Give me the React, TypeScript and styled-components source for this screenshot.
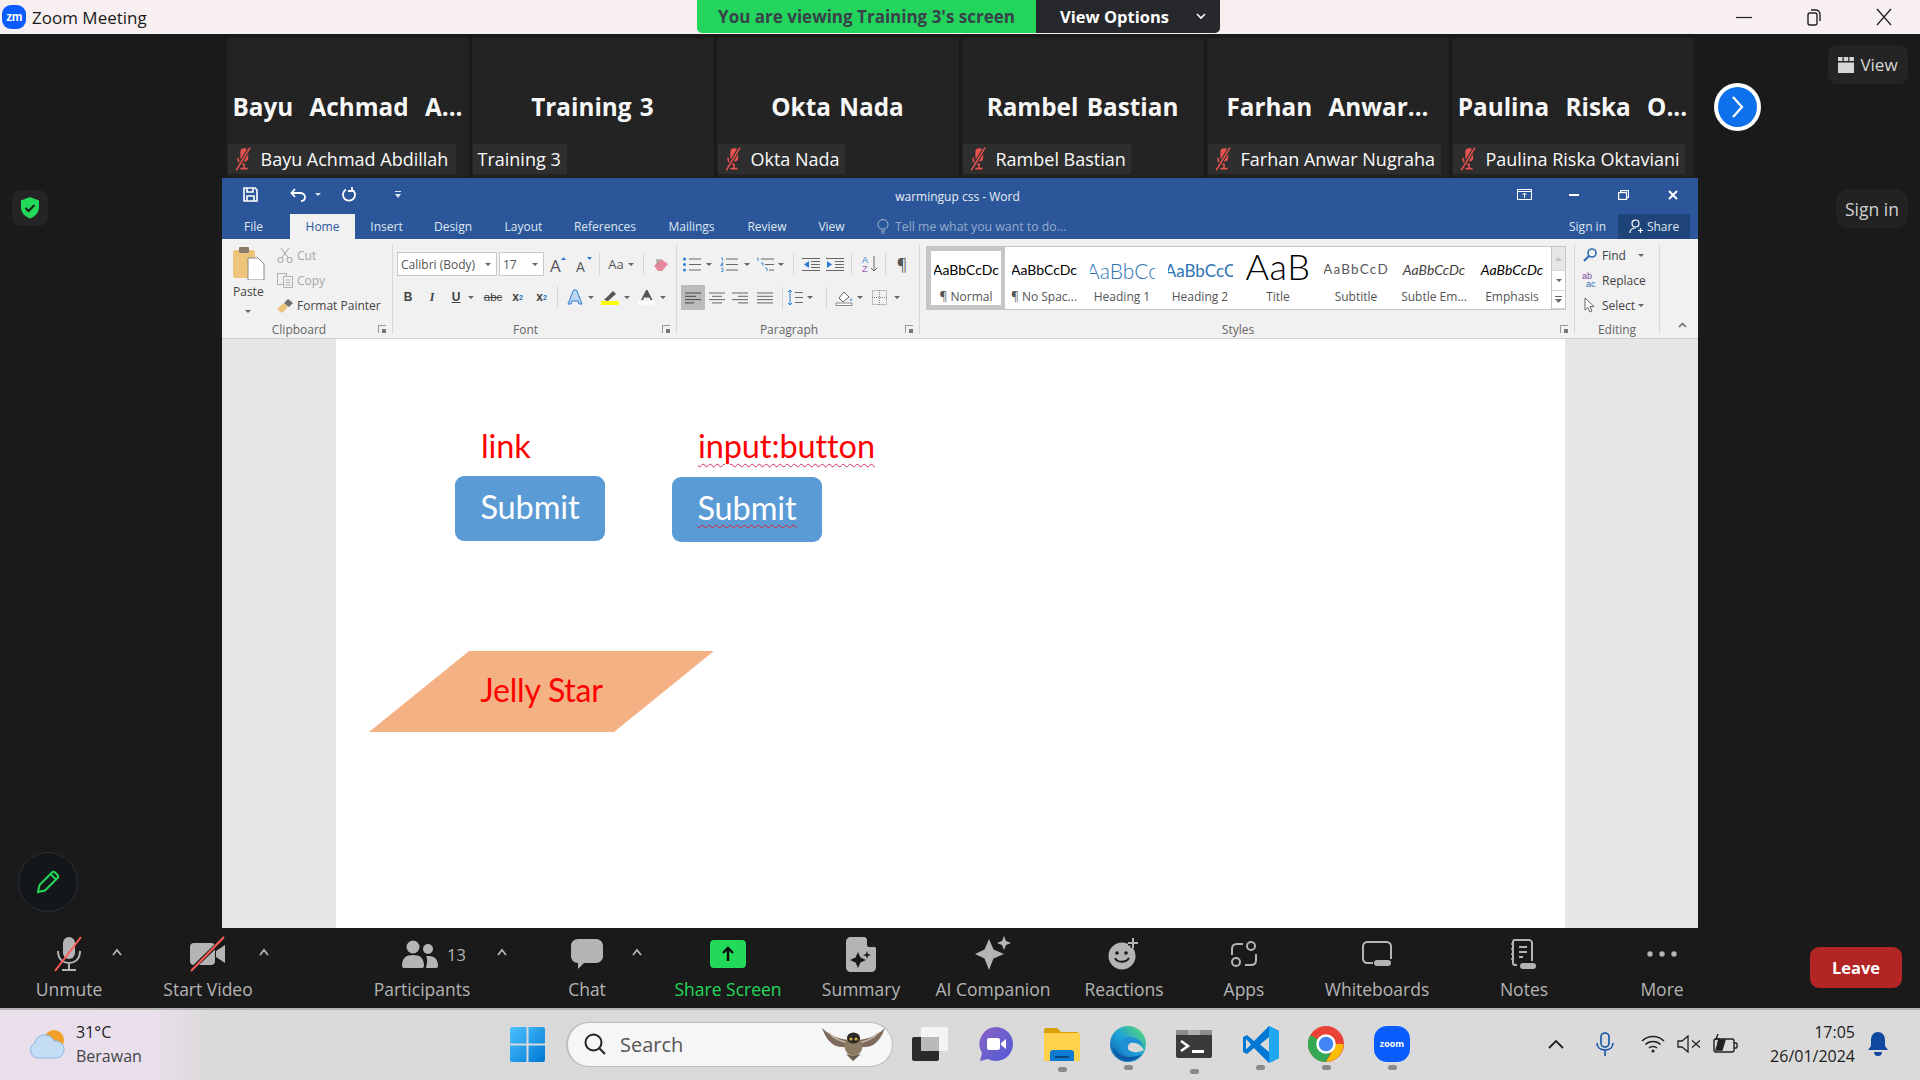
import React from "react";
import styled, { createGlobalStyle } from "styled-components";

const Global = createGlobalStyle`
  html, body { margin: 0; padding: 0; background: #1a1a1a; }
  #root { width: 1920px; height: 1080px; overflow: hidden; }
  * { box-sizing: border-box; }
  svg { display: block; flex: none; }
`;

const UI = `"Open Sans", "Noto Sans", sans-serif`;

const Screen = styled.div`
  width: 1920px; height: 1080px; display: flex; flex-direction: column;
  background: #1a1a1a; font-family: ${UI}; color: #fff; overflow: hidden;
`;

/* Zoom title bar */
const TitleBar = styled.header`
  height: 34px; background: #f8eff0; display: grid;
  grid-template-columns: 697px 523px 1fr; flex: none;
`;
const AppTitle = styled.div`
  display: flex; align-items: center; gap: 6px; padding-left: 2px;
  font-size: 17px; color: #1a1a1a;
`;
const ZoomBadge = styled.div`
  width: 24px; height: 24px; border-radius: 9px; background: #0b5cff; color: #fff;
  display: flex; align-items: center; justify-content: center;
  font: 700 12px "Liberation Sans", sans-serif; letter-spacing: -0.5px;
`;
const ViewBanner = styled.div`
  height: 33px; display: grid; grid-template-columns: 339px 1fr;
  border-radius: 0 0 5px 5px; overflow: hidden; font-weight: 700;
`;
const BannerNote = styled.div`
  background: #23d55c; color: #37424a; display: flex; align-items: center; justify-content: center; font-size: 17px; padding-bottom: 1px;
`;
const BannerOptions = styled.div`
  background: #26282b; color: #fff; display: flex; align-items: center; padding: 0 0 1px 24px; gap: 27px; font-size: 16.5px;
`;
const WindowButtons = styled.div`
  display: flex; justify-content: flex-end; align-items: center; padding-right: 28px; gap: 54px; color: #222;
`;

/* Stage */
const Stage = styled.main`
  height: 894px; flex: none; position: relative; display: flex; flex-direction: column; align-items: center; padding-top: 4px;
`;
const TileRow = styled.div`
  display: flex; gap: 3px; height: 139px; flex: none;
`;
const Tile = styled.div`
  width: 242px; background: #232323; display: flex; flex-direction: column; align-items: flex-start;
`;
const TileName = styled.div<{ $wide?: boolean }>`
  flex: 1; width: 100%; padding-top: 30px; display: flex; align-items: center; justify-content: center;
  font-size: 24.3px; font-weight: 700; color: #f7f7f7; word-spacing: ${(p) => (p.$wide ? 10 : 2)}px; white-space: pre;
`;
const NamePill = styled.div<{ $w: number }>`
  width: ${(p) => p.$w}px; height: 30px; background: #2e2e2e; margin: 0 0 3px 1px;
  display: flex; align-items: center; padding-left: 4px; gap: 5px;
  font-size: 18px; color: #fafafa; white-space: nowrap;
`;
const PillPlain = styled(NamePill)`padding-left: 5px;`;

const NextButton = styled.button`
  position: absolute; left: 1714px; top: 49px; width: 47px; height: 48px; border-radius: 50%;
  background: #0e71eb; border: 4px solid #fff; padding: 0; display: flex; align-items: center; justify-content: center;
`;
const ViewChip = styled.div`
  position: absolute; left: 1828px; top: 11px; width: 80px; height: 39px; background: #242424; border-radius: 9px;
  display: flex; align-items: center; justify-content: center; gap: 6px; font-size: 17px; color: #d6d6d6;
`;
const SignInChip = styled.div`
  position: absolute; left: 1836px; top: 155px; width: 72px; height: 39px; background: #222; border-radius: 12px;
  display: flex; align-items: center; justify-content: center; font-size: 17.5px; color: #d2d2d2;
`;
const ShieldChip = styled.div`
  position: absolute; left: 12px; top: 156px; width: 36px; height: 36px; background: #242424; border-radius: 9px;
  display: flex; align-items: center; justify-content: center;
`;
const PencilChip = styled.div`
  position: absolute; left: 18px; top: 818px; width: 60px; height: 60px; background: #14171a; border: 1px solid #2c2f36; border-radius: 50%;
  display: flex; align-items: center; justify-content: center;
`;

/* Word */
const WordWindow = styled.section`
  width: 1476px; flex: 1; margin-top: 1px; display: flex; flex-direction: column; background: #e6e6e6;
`;
const WordTitle = styled.div`
  height: 36px; background: #2b579a; display: grid; grid-template-columns: 1fr auto 1fr; align-items: center;
  font-size: 12px; color: #e8edf5;
`;
const Qat = styled.div`display: flex; align-items: center; margin-top: -3px;`;
const WordControls = styled.div`display: flex; align-items: center; justify-content: flex-end; margin-top: -3px;`;
const Spot = styled.span<{ $ml: number; $w?: number }>`
  margin-left: ${(p) => p.$ml}px; display: flex; align-items: center; justify-content: center; flex: none;
  ${(p) => (p.$w ? `width:${p.$w}px;` : "")}
`;
const WordName = styled.div`padding-right: 5px;`;
const TabBar = styled.nav`
  height: 25px; background: #2b579a; display: flex; align-items: stretch; font-size: 12px; color: #dfe6f0;
`;
const Tab = styled.div<{ $ml: number; $w: number; $active?: boolean }>`
  margin-left: ${(p) => p.$ml}px; width: ${(p) => p.$w}px; display: flex; align-items: center; justify-content: center; white-space: nowrap;
  ${(p) => (p.$active ? "background:#f1f1f1;color:#2b579a;" : "")}
`;
const TellMe = styled.div`
  margin-left: 29px; display: flex; align-items: center; gap: 6px; color: #94aacb; white-space: nowrap; font-size: 12.3px;
`;
const TabRight = styled.div`margin-left: auto; display: flex; align-items: stretch;`;
const TabSignIn = styled.div`display: flex; align-items: center; padding-right: 12px;`;
const ShareBox = styled.div`
  width: 72px; margin-right: 8px; background: #1f4479; display: flex; align-items: center; justify-content: center; gap: 3px;
`;

const Ribbon = styled.div`
  height: 100px; background: #f1f1f1; border-bottom: 1px solid #cfcfcf; display: flex; flex: none; position: relative;
  font-size: 12px; color: #444;
`;
const Group = styled.div<{ $w: number; $last?: boolean }>`
  width: ${(p) => p.$w}px; margin: 5px 0 4px; position: relative; flex: none; display: flex; flex-direction: column;
  ${(p) => (p.$last ? "" : "border-right: 1px solid #d8d8d8;")}
`;
const GroupBody = styled.div<{ $pl?: number; $pt?: number }>`
  flex: 1; display: flex; flex-direction: column; gap: 9px;
  padding-left: ${(p) => p.$pl ?? 0}px; padding-top: ${(p) => p.$pt ?? 8}px;
`;
const GroupLabel = styled.div<{ $pr?: number }>`
  height: 14px; line-height: 14px; margin-bottom: -3px; text-align: center; color: #666; font-size: 12px; padding-right: ${(p) => p.$pr ?? 0}px;
`;
const Launcher = styled.span`
  position: absolute; right: 6px; bottom: 1px; width: 8px; height: 8px;
  border-left: 1px solid #999; border-top: 1px solid #999;
  &::after { content: ""; position: absolute; right: 0; bottom: 0; width: 4px; height: 4px; background: #777; }
`;
const ToolRow = styled.div`height: 24px; display: flex; align-items: center;`;
const Caret = styled.span<{ $ml?: number }>`
  margin-left: ${(p) => p.$ml ?? 0}px; width: 0; height: 0; flex: none;
  border-left: 3px solid transparent; border-right: 3px solid transparent; border-top: 3px solid #666;
`;
const VSep = styled.span<{ $ml: number }>`
  margin-left: ${(p) => p.$ml}px; width: 1px; height: 22px; background: #d6d6d6; flex: none;
`;
const Glyph = styled.span<{ $ml: number; $w: number; $active?: boolean }>`
  margin-left: ${(p) => p.$ml}px; width: ${(p) => p.$w}px; flex: none; display: flex; align-items: center; justify-content: center;
  font: 700 12px "Liberation Sans", sans-serif; color: #444;
  ${(p) => (p.$active ? "height:25px;background:#bcbcbc;" : "")}
`;
const ItalicGlyph = styled(Glyph)`font: italic 700 12px "Liberation Serif", serif;`;
const UnderGlyph = styled(Glyph)`text-decoration: underline;`;
const StrikeGlyph = styled(Glyph)`text-decoration: line-through; font-weight: 400; font-size: 11.5px;`;
const LargeGlyph = styled(Glyph)`font: 400 14px "Open Sans", sans-serif; color: #555;`;
const Picker = styled.div<{ $w: number; $ml?: number }>`
  width: ${(p) => p.$w}px; height: 24px; margin-left: ${(p) => p.$ml ?? 0}px; background: #fff; border: 1px solid #c8c8c8;
  display: flex; align-items: center; justify-content: space-between; padding: 0 5px 0 3px; font-size: 12px; color: #555; flex: none;
`;
const ClipBody = styled.div`display: flex; padding-left: 8px; flex: 1;`;
const PasteCol = styled.div`
  width: 46px; display: flex; flex-direction: column; align-items: flex-start; padding: 2px 0 0 3px; gap: 3px; color: #444;
`;
const PasteCaret = styled(Caret)`margin: 7px 0 0 12px;`;
const StackRows = styled.div<{ $pl: number }>`
  display: flex; flex-direction: column; gap: 1px; margin-top: -1px; padding-left: ${(p) => p.$pl}px; flex: 1;
`;
const StackRow = styled.div<{ $dim?: boolean }>`
  height: 24px; display: flex; align-items: center; gap: 3px; white-space: nowrap; color: ${(p) => (p.$dim ? "#a6a6a6" : "#444")};
`;
const StackIcon = styled.span`width: 18px; display: flex; justify-content: center; flex: none;`;

const Gallery = styled.div`
  margin: 2px 0 0 6px; width: 640px; height: 64px; background: #fff; border: 1px solid #c6c6c6; display: flex;
`;
const StyleItem = styled.div<{ $on?: boolean }>`
  width: 78px; display: flex; flex-direction: column; align-items: center; overflow: hidden; flex: none;
  ${(p) => (p.$on ? "border: 4px solid #c6c6c6;" : "")}
`;
const Preview = styled.div<{ $on?: boolean }>`
  height: 32px; width: 65px; overflow: hidden; display: flex; align-items: center; justify-content: center; white-space: nowrap;
  margin-top: ${(p) => (p.$on ? "3px" : "7px")}; color: #000; font-family: "Lato", sans-serif;
`;
const PreviewText = styled.span<{ $size: number; $color?: string; $italic?: boolean; $spacing?: number; $light?: boolean; $dy?: number }>`
  font-size: ${(p) => p.$size}px; color: ${(p) => p.$color ?? "#000"}; line-height: 1;
  font-style: ${(p) => (p.$italic ? "italic" : "normal")};
  letter-spacing: ${(p) => p.$spacing ?? 0}px; font-weight: ${(p) => (p.$light ? 300 : 400)};
  transform: translateY(${(p) => p.$dy ?? 0}px);
`;
const StyleName = styled.div`
  margin-top: 3px; font-size: 12px; line-height: 15px; color: #555; white-space: nowrap;
`;
const GalleryScroll = styled.div`
  margin-left: auto; width: 15px; display: flex; flex-direction: column; border-left: 1px solid #c6c6c6;
`;
const ScrollCell = styled.div<{ $h: number; $on?: boolean }>`
  height: ${(p) => p.$h}px; display: flex; align-items: center; justify-content: center;
  background: ${(p) => (p.$on ? "#e6e6e6" : "#fff")}; border-bottom: 1px solid #d6d6d6;
`;
const Collapse = styled.div`flex: 1; display: flex; align-items: flex-end; justify-content: center; padding: 0 0 6px 6px;`;

const DocArea = styled.div`flex: 1; padding-left: 114px; display: flex; overflow: hidden;`;
const Page = styled.div`
  width: 1229px; background: #fff; padding: 88px 0 0 33px; display: flex; flex-direction: column; align-items: flex-start;
  font-family: "Lato", sans-serif;
`;
const ButtonRow = styled.div`display: flex; gap: 67px; padding-left: 86px;`;
const SampleCol = styled.div`width: 150px; display: flex; flex-direction: column;`;
const SampleLabel = styled.div<{ $wavy?: boolean }>`
  height: 40px; line-height: 38px; padding-left: 26px; font-size: 32.5px; color: #f00; white-space: nowrap; letter-spacing: -0.1px;
  ${(p) => (p.$wavy ? "text-decoration: underline wavy #d22a63 1px; text-underline-offset: 5px;" : "")}
`;
const SampleButton = styled.div<{ $mt: number }>`
  margin-top: ${(p) => p.$mt}px; width: 150px; height: 65px; background: #5b9bd5; border-radius: 9px; display: flex; align-items: center; justify-content: center;
  font-size: 32.5px; color: #fff; letter-spacing: -0.1px; padding-bottom: 4px;
`;
const Wavy = styled.span`
  text-decoration: underline wavy #d8222f 1px; text-underline-offset: 4px;
`;
const Parallelogram = styled.div`
  margin-top: 109px; width: 345px; height: 81px; background: #f4b183; padding-bottom: 4px;
  clip-path: polygon(29% 0, 100% 0, 71% 100%, 0 100%);
  display: flex; align-items: center; justify-content: center; font-size: 32px; color: #f00; letter-spacing: -0.2px;
`;

/* Zoom toolbar */
const MeetingBar = styled.div`height: 80px; background: #1a1a1a; display: flex; flex: none; align-items: flex-start;`;
const BarItem = styled.div<{ $w: number; $ml: number; $green?: boolean }>`
  width: ${(p) => p.$w}px; margin-left: ${(p) => p.$ml}px; flex: none; display: flex; flex-direction: column; align-items: center; padding-top: 5px;
  color: ${(p) => (p.$green ? "#23d959" : "#b4b4b4")};
`;
const BarIcon = styled.div<{ $shift?: number }>`
  height: 42px; display: flex; align-items: center; justify-content: center; gap: 9px; font-size: 16.5px; padding-left: ${(p) => p.$shift ?? 0}px;
`;
const BarLabel = styled.div`margin-top: 2px; line-height: 24px; font-size: 17.5px; font-weight: 500; white-space: nowrap;`;
const BarChevron = styled.div<{ $ml: number }>`margin: 20px 0 0 ${(p) => p.$ml}px; width: 12px; flex: none;`;
const LeaveButton = styled.button`
  margin: 19px 18px 0 auto; width: 92px; height: 41px; border: 0; border-radius: 9px; background: #b32525; color: #fff;
  font: 700 16.5px ${UI};
`;

/* Taskbar */
const Taskbar = styled.footer`
  height: 72px; flex: none; display: flex; align-items: center; color: #1c1c1c; border-top: 2px solid #b4b4b4; padding-bottom: 2px;
  background: linear-gradient(90deg, #e9dfeb 0, #eadfec 150px, #d9d9d9 215px, #dadada 100%);
`;
const Weather = styled.div`display: flex; align-items: center; gap: 10px; margin-left: 28px; width: 482px; flex: none;`;
const WeatherText = styled.div`display: flex; flex-direction: column; font-size: 16px; line-height: 24px;`;
const WeatherSub = styled.span`color: #444;`;
const SearchPill = styled.div`
  margin-left: 21px; width: 327px; height: 45px; border-radius: 23px; background: #f6f6f6; border: 1px solid #bdbdbd; border-left-width: 2px; flex: none;
  display: flex; align-items: center; padding-left: 16px; gap: 14px; font-size: 20px; color: #555;
`;
const OwlSpot = styled.div`margin-left: auto; margin-right: 6px;`;
const TaskSlot = styled.div<{ $first?: boolean }>`
  width: 66px; flex: none; display: flex; justify-content: center; position: relative; ${(p) => (p.$first ? "margin-left: 4px;" : "")}
`;
const RunDot = styled.span`
  position: absolute; left: 29px; top: 39px; width: 9px; height: 5px; border-radius: 3px; background: #8a8a8a;
`;
const TraySpot = styled.div<{ $ml: number; $w: number }>`
  margin-left: ${(p) => p.$ml}px; width: ${(p) => p.$w}px; flex: none; display: flex; justify-content: center;
`;
const Clock = styled.div`width: 115px; flex: none; text-align: right; font-size: 16px; line-height: 24px;`;

const cols = "#b4b4b4";

const MicMuted = ({ size = 24, color = "#e8534f" }: { size?: number; color?: string }) => (
  <svg width={size} height={size} viewBox="0 0 20 20">
    <rect x="7" y="1" width="6.500" height="11" rx="3" fill={color} />
    <path d="M5 9c0 4 2 5.500 5 5.500v3.500M7 18h6" stroke={color} fill="none" strokeWidth="1.300" />
    <path d="M3.500 19.500 15 .5" stroke="#2e2e2e" strokeWidth="3" />
    <path d="M3.500 19.500 15 .5" stroke={color} strokeWidth="1.300" />
  </svg>
);

const ChevronUp = () => (
  <svg width="12" height="9" viewBox="0 0 12 9"><path d="M2 7l4-5 4 5" stroke="#b4b4b4" strokeWidth="1.8" fill="none" /></svg>
);

const Icons: Record<string, React.ReactNode> = {
  mic: (
    <svg width="32" height="36" viewBox="0 0 32 36">
      <rect x="10" y="1" width="12" height="22" rx="6" fill={cols} />
      <path d="M5 15c0 9 6 12 11 12s11-3 11-12M16 27v6M9 34h14" stroke={cols} strokeWidth="2" fill="none" />
      <path d="M2 35 28 1" stroke="#ff5c57" strokeWidth="2" />
    </svg>
  ),
  video: (
    <svg width="38" height="36" viewBox="0 0 38 36">
      <rect x="1" y="7" width="25" height="22" rx="4" fill={cols} />
      <path d="M27 15l9-6v18l-9-6z" fill={cols} />
      <path d="M1 35 36 1" stroke="#1a1a1a" strokeWidth="4" />
      <path d="M2 35 35 1" stroke="#ff5c57" strokeWidth="2" />
    </svg>
  ),
  people: (
    <svg width="36" height="28" viewBox="0 0 36 28">
      <circle cx="11" cy="7" r="6.5" fill={cols} />
      <circle cx="26" cy="9" r="5" fill={cols} />
      <path d="M0 26c0-8 4-11 11-11s11 3 11 11c0 1-1 2-2 2H2c-1 0-2-1-2-2z" fill={cols} />
      <path d="M24 16h3c6 0 9 4 9 10 0 1-1 2-2 2H24c1-5 2-8 0-12z" fill={cols} />
    </svg>
  ),
  chat: (
    <svg width="32" height="30" viewBox="0 0 32 30">
      <path d="M7 0h18c4 0 7 3 7 7v10c0 4-3 7-7 7H13l-6 6v-6c-4 0-7-3-7-7V7c0-4 3-7 7-7z" fill={cols} />
    </svg>
  ),
  share: (
    <svg width="36" height="28" viewBox="0 0 36 28">
      <rect width="36" height="28" rx="4" fill="#23d959" />
      <path d="M18 21V8M13 13l5-5 5 5" stroke="#0b0b0b" strokeWidth="2.4" fill="none" />
    </svg>
  ),
  summary: (
    <svg width="30" height="35" viewBox="0 0 30 35">
      <path d="M5 0h14l11 11v19c0 3-2 5-5 5H5c-3 0-5-2-5-5V5c0-3 2-5 5-5z" fill={cols} />
      <path d="M21 1l8 9h-6c-1 0-2-1-2-2z" fill="#1a1a1a" />
      <path d="M12 15l2.500 5.500L20 23l-5.500 2.500L12 31l-2.500-5.500L4 23l5.500-2.500zM21 14l1 3 3 1-3 1-1 3-1-3-3-1 3-1z" fill="#1a1a1a" />
    </svg>
  ),
  ai: (
    <svg width="36" height="36" viewBox="0 0 36 36">
      <path d="M14 3l4.500 10.500L29 18l-10.500 4.500L14 34l-4.500-11.500L0 18l9.500-4.500z" fill={cols} />
      <path d="M29 0l2 5 5 2-5 2-2 5-2-5-5-2 5-2z" fill={cols} />
    </svg>
  ),
  reactions: (
    <svg width="32" height="32" viewBox="0 0 32 32">
      <circle cx="14" cy="18" r="13.500" fill={cols} />
      <circle cx="9" cy="15" r="1.800" fill="#1a1a1a" /><circle cx="18" cy="15" r="1.800" fill="#1a1a1a" />
      <path d="M7 20c2 5 11 5 14 0" stroke="#1a1a1a" strokeWidth="2" fill="none" />
      <path d="M25 0v10M20 5h10" stroke="#1a1a1a" strokeWidth="5" /><path d="M25 0v10M20 5h10" stroke={cols} strokeWidth="2" />
    </svg>
  ),
  apps: (
    <svg width="26" height="26" viewBox="0 0 26 26" fill="none" stroke={cols} strokeWidth="2">
      <path d="M12 3H6C3 3 1 5 1 8v6M25 13v6c0 3-2 5-5 5h-6" />
      <circle cx="20" cy="5" r="4" /><circle cx="5" cy="21" r="4" />
    </svg>
  ),
  board: (
    <svg width="30" height="26" viewBox="0 0 30 26">
      <path d="M11 22H5c-2 0-4-2-4-4V5c0-2 2-4 4-4h20c2 0 4 2 4 4v13" stroke={cols} strokeWidth="2" fill="none" />
      <rect x="12" y="19" width="17" height="6" rx="3" fill={cols} />
    </svg>
  ),
  notes: (
    <svg width="26" height="30" viewBox="0 0 26 30">
      <path d="M6 26H4c-1 0-2-1-2-2V3c0-1 1-2 2-2h14c1 0 3 1 3 3v18" stroke={cols} strokeWidth="2" fill="none" />
      <path d="M8 8h8M8 13h8M8 18h4" stroke={cols} strokeWidth="2" />
      <path d="M0 5h3M0 10h3M0 15h3M0 20h3" stroke={cols} strokeWidth="1.500" />
      <rect x="9" y="24" width="16" height="6" rx="3" fill={cols} />
    </svg>
  ),
  more: (
    <svg width="30" height="8" viewBox="0 0 30 8" fill={cols}>
      <circle cx="3" cy="4" r="2.700" /><circle cx="15" cy="4" r="2.700" /><circle cx="27" cy="4" r="2.700" />
    </svg>
  ),
};

const Line = ({ w, x = 0, y, c = "#555" }: { w: number; x?: number; y: number; c?: string }) => <rect x={x} y={y} width={w} height="1" fill={c} />;

const tiles = [
  { big: "Bayu Achmad A...", small: "Bayu Achmad Abdillah", w: 228, mic: true, wide: true },
  { big: "Training 3", small: "Training 3", w: 94, mic: false },
  { big: "Okta Nada", small: "Okta Nada", w: 127, mic: true },
  { big: "Rambel Bastian", small: "Rambel Bastian", w: 168, mic: true },
  { big: "Farhan Anwar...", small: "Farhan Anwar Nugraha", w: 233, mic: true, wide: true },
  { big: "Paulina Riska O...", small: "Paulina Riska Oktaviani", w: 232, mic: true, wide: true },
];

const tabs = [
  { t: "File", ml: 19, w: 25 }, { t: "Home", ml: 24, w: 65, active: true }, { t: "Insert", ml: 13, w: 37 },
  { t: "Design", ml: 26, w: 44 }, { t: "Layout", ml: 26, w: 45 }, { t: "References", ml: 25, w: 68 },
  { t: "Mailings", ml: 25, w: 55 }, { t: "Review", ml: 25, w: 46 }, { t: "View", ml: 25, w: 33 },
];

const styleItems = [
  { s: "AaBbCcDc", size: 14, name: "¶ Normal", on: true },
  { s: "AaBbCcDc", size: 14, name: "¶ No Spac..." },
  { s: "AaBbCc", size: 21, name: "Heading 1", color: "#2e74b5", light: true },
  { s: "AaBbCcC", size: 17, name: "Heading 2", color: "#2e74b5" },
  { s: "AaB", size: 36, name: "Title", light: true, spacing: 0.5, dy: -4 },
  { s: "AaBbCcD", size: 13.5, name: "Subtitle", color: "#5a5a5a", spacing: 1.2 },
  { s: "AaBbCcDc", size: 14, name: "Subtle Em...", color: "#404040", italic: true },
  { s: "AaBbCcDc", size: 14, name: "Emphasis", italic: true },
];

const bar = [
  { label: "Unmute", w: 84, ml: 27, icon: "mic", chev: 0 },
  { label: "Start Video", w: 100, ml: 35, icon: "video", chev: 0 },
  { label: "Participants", w: 104, ml: 100, icon: "people", count: "13", chev: 22, shift: 24 },
  { label: "Chat", w: 60, ml: 49, icon: "chat", chev: 14 },
  { label: "Share Screen", w: 112, ml: 29, icon: "share", green: true },
  { label: "Summary", w: 100, ml: 27, icon: "summary" },
  { label: "AI Companion", w: 130, ml: 17, icon: "ai" },
  { label: "Reactions", w: 90, ml: 21, icon: "reactions" },
  { label: "Apps", w: 60, ml: 45, icon: "apps" },
  { label: "Whiteboards", w: 120, ml: 43, icon: "board" },
  { label: "Notes", w: 60, ml: 57, icon: "notes" },
  { label: "More", w: 60, ml: 78, icon: "more" },
];

const LinesIcon = ({ c = "#666", rows = [14, 14, 14, 14], align = "left" }: { c?: string; rows?: number[]; align?: string }) => (
  <svg width="16" height="12" viewBox="0 0 16 12">
    {rows.map((w, i) => <Line key={i} w={w} y={i * 3.3 + 0.5} c={c} x={align === "left" ? 0 : align === "right" ? 16 - w : (16 - w) / 2} />)}
  </svg>
);

const FontStep = ({ size, up }: { size: number; up?: boolean }) => (
  <svg width="17" height="17" viewBox="0 0 17 17">
    <text x="0" y="16" fontSize={size} fill="#555" fontFamily="Open Sans">A</text>
    <path d={up ? "M11 4l2.500-3L16 4z" : "M11 1l2.500 3L16 1z"} fill="#2b7cd3" />
  </svg>
);

const Owl = () => (
  <svg width="65" height="36" viewBox="0 0 65 36">
    <path d="M31 14C22 14 12 12 1 2c3 8 6 13 12 17 5 3 13 2 19 2z" fill="#7d6a5c" />
    <path d="M34 14c9 0 19-2 30-12-3 8-6 13-12 17-5 3-13 2-19 2z" fill="#7d6a5c" />
    <path d="M8 7c5 6 12 9 22 10M57 7c-5 6-12 9-22 10" stroke="#c8b9a8" strokeWidth="1.500" fill="none" />
    <ellipse cx="32.500" cy="20" rx="9" ry="10" fill="#8d7a62" />
    <ellipse cx="32.500" cy="12" rx="6.500" ry="5.500" fill="#2d2a26" />
    <circle cx="30" cy="13" r="1.500" fill="#d5b64a" /><circle cx="35" cy="13" r="1.500" fill="#d5b64a" />
    <path d="M25 28l7 7 8-7-8 2z" fill="#6b5a4b" />
  </svg>
);

export default function App() {
  return (
    <Screen>
      <Global />
      <TitleBar>
        <AppTitle><ZoomBadge>zm</ZoomBadge>Zoom Meeting</AppTitle>
        <ViewBanner>
          <BannerNote>You are viewing Training 3's screen</BannerNote>
          <BannerOptions>
            View Options
            <svg width="10" height="7" viewBox="0 0 10 7"><path d="M1 1l4 4 4-4" stroke="#fff" strokeWidth="1.600" fill="none" /></svg>
          </BannerOptions>
        </ViewBanner>
        <WindowButtons>
          <svg width="16" height="16" viewBox="0 0 16 16"><path d="M0 8.500h16" stroke="#222" strokeWidth="1.200" /></svg>
          <svg width="16" height="18" viewBox="0 0 16 18" fill="none" stroke="#222" strokeWidth="1.400"><rect x="2" y="5" width="9" height="12" rx="2" /><path d="M5 2h5c2 0 4 2 4 4v7" /></svg>
          <svg width="16" height="18" viewBox="0 0 16 18"><path d="M1 1l14 16M15 1L1 17" stroke="#222" strokeWidth="1.300" /></svg>
        </WindowButtons>
      </TitleBar>

      <Stage>
        <TileRow>
          {tiles.map((t) => (
            <Tile key={t.small}>
              <TileName $wide={t.wide}>{t.big}</TileName>
              {t.mic ? (
                <NamePill $w={t.w}><MicMuted />{t.small}</NamePill>
              ) : (
                <PillPlain $w={t.w}>{t.small}</PillPlain>
              )}
            </Tile>
          ))}
        </TileRow>

        <NextButton aria-label="Next">
          <svg width="14" height="24" viewBox="0 0 14 24"><path d="M2 2l9 10-9 10" stroke="#fff" strokeWidth="2.200" fill="none" /></svg>
        </NextButton>
        <ViewChip>
          <svg width="16" height="16" viewBox="0 0 16 16" fill="#d6d6d6">
            <rect x="0" y="0" width="4.500" height="4" /><rect x="5.700" y="0" width="4.500" height="4" /><rect x="11.400" y="0" width="4.500" height="4" /><rect x="0" y="5.500" width="16" height="10.500" />
          </svg>
          View
        </ViewChip>
        <SignInChip>Sign in</SignInChip>
        <ShieldChip>
          <svg width="20" height="22" viewBox="0 0 20 22">
            <path d="M10 0l9 3.500v7c0 5-4 9-9 11-5-2-9-6-9-11v-7z" fill="#23d959" />
            <path d="M5.500 11l3 3 6-6" stroke="#1a1a1a" strokeWidth="2" fill="none" />
          </svg>
        </ShieldChip>
        <PencilChip>
          <svg width="24" height="24" viewBox="0 0 24 24" fill="none" stroke="#23d959" strokeWidth="2">
            <path d="M2 22l1.500-7L16 2.500c1-1 2-1 3 0l2.500 2.500c1 1 1 2 0 3L9 20.500z" /><path d="M14.500 4l5.500 5.500" />
          </svg>
        </PencilChip>

        <WordWindow>
          <WordTitle>
            <Qat>
              <Spot $ml={21}>
                <svg width="15" height="15" viewBox="0 0 15 15" fill="none" stroke="#fff" strokeWidth="1.600"><path d="M1 1h11l2 2v11H1z" /><path d="M4 1v4h6V1M4 14V9h7v5" /></svg>
              </Spot>
              <Spot $ml={32}>
                <svg width="16" height="14" viewBox="0 0 16 14" fill="none" stroke="#fff" strokeWidth="1.800"><path d="M5 1L1.500 5 5 9M2 5h8c3 0 5 2 5 4s-1 4-4 4" /></svg>
              </Spot>
              <Spot $ml={9}><Caret style={{ borderTopColor: "#dfe6f0" }} /></Spot>
              <Spot $ml={20}>
                <svg width="15" height="15" viewBox="0 0 15 15" fill="none" stroke="#fff" strokeWidth="1.800"><path d="M5 2.500A6 6 0 1 0 11 2.500M11 0v4H7" /></svg>
              </Spot>
              <Spot $ml={39}>
                <svg width="6" height="7" viewBox="0 0 6 7" fill="#dfe6f0"><rect width="6" height="1" /><path d="M0 3h6L3 7z" /></svg>
              </Spot>
            </Qat>
            <WordName>warmingup css - Word</WordName>
            <WordControls>
              <svg width="15" height="11" viewBox="0 0 15 11" fill="none" stroke="#fff"><rect x=".5" y=".5" width="14" height="10" /><path d="M.5 2.500h14M7.500 9V4M5.500 6l2-2 2 2" /></svg>
              <Spot $ml={37}><svg width="10" height="4" viewBox="0 0 10 4"><rect y="1" width="10" height="2" fill="#fff" /></svg></Spot>
              <Spot $ml={39}><svg width="11" height="10" viewBox="0 0 11 10" fill="none" stroke="#fff" strokeWidth="1.200"><rect x=".6" y="2.600" width="8" height="6.800" /><path d="M2.600 2.600V.6h8v6.800H8.600" /></svg></Spot>
              <Spot $ml={39} style={{ marginRight: 20 }}><svg width="10" height="10" viewBox="0 0 10 10"><path d="M1 1l8 8M9 1L1 9" stroke="#fff" strokeWidth="2" /></svg></Spot>
            </WordControls>
          </WordTitle>

          <TabBar>
            {tabs.map((t) => <Tab key={t.t} $ml={t.ml} $w={t.w} $active={t.active}>{t.t}</Tab>)}
            <TellMe>
              <svg width="12" height="15" viewBox="0 0 12 15" fill="none" stroke="#a9bad4"><path d="M3.500 10C2 8.500 1 7.500 1 5.500a5 5 0 0 1 10 0c0 2-1 3-2.500 4.500zM4 12h4M4.500 14h3" /></svg>
              Tell me what you want to do...
            </TellMe>
            <TabRight>
              <TabSignIn>Sign in</TabSignIn>
              <ShareBox>
                <svg width="15" height="15" viewBox="0 0 15 15" fill="none" stroke="#fff" strokeWidth="1.200"><circle cx="6.500" cy="4.500" r="3.500" /><path d="M1 14c0-3 2-5 5.500-5M11.500 9v5M9 11.500h5" /></svg>
                Share
              </ShareBox>
            </TabRight>
          </TabBar>

          <Ribbon>
            <Group $w={171}>
              <ClipBody>
                <PasteCol>
                  <svg width="32" height="34" viewBox="0 0 32 34">
                    <rect x="0" y="4" width="22" height="28" rx="2" fill="#eec47a" />
                    <rect x="6" y="1" width="10" height="6" rx="1" fill="#8a7a6a" />
                    <path d="M15 12h10l6 6v16H15z" fill="#fff" stroke="#888" />
                  </svg>
                  Paste
                  <PasteCaret />
                </PasteCol>
                <StackRows $pl={0}>
                  <StackRow $dim>
                    <StackIcon><svg width="16" height="16" viewBox="0 0 16 16" fill="none" stroke="#b2b2b2" strokeWidth="1.200"><circle cx="3.500" cy="13" r="2.500" /><circle cx="12.500" cy="13" r="2.500" /><path d="M4.500 11L12 1M11.500 11L4 1" /></svg></StackIcon>
                    Cut
                  </StackRow>
                  <StackRow $dim>
                    <StackIcon><svg width="16" height="15" viewBox="0 0 16 15" fill="none" stroke="#b2b2b2"><rect x=".5" y=".5" width="9" height="11" /><path d="M6.500 3.500h9v11h-9z" fill="#f1f1f1" /><path d="M8.500 7h5M8.500 9.500h5M8.500 12h5" /></svg></StackIcon>
                    Copy
                  </StackRow>
                  <StackRow>
                    <StackIcon><svg width="17" height="15" viewBox="0 0 17 15"><path d="M0 11l7-6 4 4-6 6z" fill="#eec47a" /><path d="M7 5l4-4 5 4-4 4z" fill="#6e6e6e" /></svg></StackIcon>
                    Format Painter
                  </StackRow>
                </StackRows>
              </ClipBody>
              <GroupLabel $pr={16}>Clipboard</GroupLabel>
              <Launcher />
            </Group>

            <Group $w={284}>
              <GroupBody $pl={4}>
                <ToolRow>
                  <Picker $w={100}>Calibri (Body)<Caret /></Picker>
                  <Picker $w={45} $ml={2}>17<Caret /></Picker>
                  <Spot $ml={6}><FontStep size={17} up /></Spot>
                  <Spot $ml={9}><FontStep size={14} /></Spot>
                  <VSep $ml={6} />
                  <LargeGlyph $ml={8} $w={16} style={{ fontSize: 13 }}>Aa</LargeGlyph>
                  <Caret $ml={4} />
                  <VSep $ml={9} />
                  <Spot $ml={9}><svg width="16" height="15" viewBox="0 0 16 15"><path d="M1 9l7-7 7 5-6 7H5z" fill="#e8889f" /><path d="M3 2h4l-3 8z" fill="#8a8a8a" opacity=".6" /></svg></Spot>
                </ToolRow>
                <ToolRow>
                  <Glyph $ml={5} $w={12}>B</Glyph>
                  <ItalicGlyph $ml={12} $w={12}>I</ItalicGlyph>
                  <UnderGlyph $ml={12} $w={12}>U</UnderGlyph>
                  <Caret $ml={6} />
                  <StrikeGlyph $ml={10} $w={18}>abc</StrikeGlyph>
                  <Glyph $ml={8} $w={15}>x<sub style={{ fontSize: 7, color: "#2b6cb0" }}>2</sub></Glyph>
                  <Glyph $ml={9} $w={15}>x<sup style={{ fontSize: 7, color: "#2b6cb0" }}>2</sup></Glyph>
                  <VSep $ml={8} />
                  <Spot $ml={9}><svg width="16" height="16" viewBox="0 0 16 16"><path d="M1 15L6.500 1h3L15 15h-3l-1-3H5l-1 3z" fill="#bcd6ef" stroke="#2b7cd3" /></svg></Spot>
                  <Caret $ml={5} />
                  <Spot $ml={7}><svg width="18" height="16" viewBox="0 0 18 16"><rect y="12" width="18" height="4" fill="#ffff00" /><path d="M3 11l9-9 3 3-8 7z" fill="#555" /></svg></Spot>
                  <Caret $ml={5} />
                  <Spot $ml={8}><svg width="17" height="16" viewBox="0 0 17 16"><path d="M3 11L8 1h1.500l5 10h-2l-1-2.500H6L5 11z" fill="#555" /><rect y="12.500" width="17" height="3" fill="#fff" /></svg></Spot>
                  <Caret $ml={5} />
                </ToolRow>
              </GroupBody>
              <GroupLabel $pr={18}>Font</GroupLabel>
              <Launcher />
            </Group>

            <Group $w={243}>
              <GroupBody $pl={4}>
                <ToolRow>
                  <Spot $ml={2}><svg width="18" height="15" viewBox="0 0 18 15"><circle cx="1.500" cy="2" r="1.500" fill="#2b7cd3" /><circle cx="1.500" cy="7.500" r="1.500" fill="#2b7cd3" /><circle cx="1.500" cy="13" r="1.500" fill="#2b7cd3" /><path d="M6 2h12M6 7.500h12M6 13h12" stroke="#666" /></svg></Spot>
                  <Caret $ml={5} />
                  <Spot $ml={8}><svg width="18" height="15" viewBox="0 0 18 15"><path d="M6 2h12M6 7.500h12M6 13h12" stroke="#666" /><path d="M1 1h1.500v3M1 6h2v1.500H1V9h2M1 11.500h2v3H1" stroke="#2b7cd3" fill="none" strokeWidth=".8" /></svg></Spot>
                  <Caret $ml={6} />
                  <Spot $ml={6}><svg width="18" height="15" viewBox="0 0 18 15"><path d="M5 2h13M9 7.500h9M13 13h5" stroke="#666" /><path d="M1 1h1v3M5 6h2v3M9 11h2v3" stroke="#2b7cd3" fill="none" strokeWidth=".8" /></svg></Spot>
                  <Caret $ml={4} />
                  <VSep $ml={9} />
                  <Spot $ml={8}><svg width="18" height="13" viewBox="0 0 18 13"><path d="M0 .5h18M9 3.500h9M9 6.500h9M9 9.500h9M0 12.500h18" stroke="#666" /><path d="M7 3L2 6.500 7 10z" fill="#2b7cd3" /></svg></Spot>
                  <Spot $ml={6}><svg width="18" height="13" viewBox="0 0 18 13"><path d="M0 .5h18M9 3.500h9M9 6.500h9M9 9.500h9M0 12.500h18" stroke="#666" /><path d="M1 3l5 3.500L1 10z" fill="#2b7cd3" /></svg></Spot>
                  <VSep $ml={7} />
                  <Spot $ml={10}><svg width="16" height="18" viewBox="0 0 16 18"><text x="0" y="8" fontSize="9" fill="#2b7cd3" fontFamily="Liberation Sans">A</text><text x="0" y="17" fontSize="9" fill="#9b59b6" fontFamily="Liberation Sans">Z</text><path d="M12 1v15M9 13l3 3 3-3" stroke="#666" fill="none" /></svg></Spot>
                  <VSep $ml={7} />
                  <LargeGlyph $ml={9} $w={14} style={{ fontSize: 16 }}>¶</LargeGlyph>
                </ToolRow>
                <ToolRow style={{ height: 25 }}>
                  <Glyph $ml={0} $w={24} $active><LinesIcon rows={[16, 11, 16, 9]} c="#444" /></Glyph>
                  <Spot $ml={4}><LinesIcon rows={[16, 10, 16, 10]} align="center" /></Spot>
                  <Spot $ml={7}><LinesIcon rows={[16, 10, 16, 10]} align="right" /></Spot>
                  <Spot $ml={9}><LinesIcon rows={[16, 16, 16, 16]} /></Spot>
                  <VSep $ml={9} />
                  <Spot $ml={4}><svg width="16" height="17" viewBox="0 0 16 17"><path d="M3 1v15M1 3l2-2 2 2M1 14l2 2 2-2" stroke="#2b7cd3" fill="none" /><path d="M8 3.500h8M8 8.500h8M8 13.500h8" stroke="#666" /></svg></Spot>
                  <Caret $ml={4} />
                  <VSep $ml={13} />
                  <Spot $ml={8}><svg width="18" height="16" viewBox="0 0 18 16"><path d="M4 8l5-6 5 5-6 5z" fill="#fff" stroke="#666" /><path d="M16 8c1 2 1 3 0 3s-1-1 0-3z" fill="#2b7cd3" /><path d="M1 13h16v2.500H1z" fill="#fff" stroke="#888" /></svg></Spot>
                  <Caret $ml={4} />
                  <Spot $ml={9}><svg width="15" height="15" viewBox="0 0 15 15" fill="none" stroke="#888" strokeDasharray="1 1"><rect x=".5" y=".5" width="14" height="14" /><path d="M7.500 0v15M0 7.500h15" /></svg></Spot>
                  <Caret $ml={7} />
                </ToolRow>
              </GroupBody>
              <GroupLabel $pr={18}>Paragraph</GroupLabel>
              <Launcher />
            </Group>

            <Group $w={655}>
              <GroupBody $pt={0}>
                <Gallery>
                  {styleItems.map((s) => (
                    <StyleItem key={s.name} $on={s.on}>
                      <Preview $on={s.on}>
                        <PreviewText $size={s.size} $color={s.color} $italic={s.italic} $spacing={s.spacing} $light={s.light} $dy={s.dy}>{s.s}</PreviewText>
                      </Preview>
                      <StyleName>{s.name}</StyleName>
                    </StyleItem>
                  ))}
                  <GalleryScroll>
                    <ScrollCell $h={24} $on><svg width="7" height="4" viewBox="0 0 7 4"><path d="M0 4l3.500-4L7 4z" fill="#c2c2c2" /></svg></ScrollCell>
                    <ScrollCell $h={20}><Caret /></ScrollCell>
                    <ScrollCell $h={18}><svg width="7" height="7" viewBox="0 0 7 7" fill="#666"><rect width="7" height="1" /><path d="M0 3h7L3.500 7z" /></svg></ScrollCell>
                  </GalleryScroll>
                </Gallery>
              </GroupBody>
              <GroupLabel $pr={18}>Styles</GroupLabel>
              <Launcher />
            </Group>

            <Group $w={85}>
              <GroupBody $pt={0} $pl={6}>
                <StackRows $pl={0}>
                  <StackRow>
                    <StackIcon><svg width="14" height="14" viewBox="0 0 14 14" fill="none" stroke="#2b6cb0" strokeWidth="1.600"><circle cx="9" cy="5" r="4" /><path d="M6 8l-5 5" strokeWidth="2.200" /></svg></StackIcon>
                    Find <Caret $ml={9} />
                  </StackRow>
                  <StackRow>
                    <StackIcon><svg width="17" height="16" viewBox="0 0 17 16"><text x="0" y="7" fontSize="9" fill="#7a4ea3" fontFamily="Liberation Sans">ab</text><text x="4" y="15" fontSize="9" fill="#2b6cb0" fontFamily="Liberation Sans">ac</text></svg></StackIcon>
                    Replace
                  </StackRow>
                  <StackRow>
                    <StackIcon><svg width="12" height="16" viewBox="0 0 12 16"><path d="M1 1v12l3-2.500 2 4.500 2-1-2-4.500h4z" fill="#fff" stroke="#666" /></svg></StackIcon>
                    Select <Caret />
                  </StackRow>
                </StackRows>
              </GroupBody>
              <GroupLabel>Editing</GroupLabel>
            </Group>

            <Group $w={39} $last>
              <Collapse>
                <svg width="9" height="6" viewBox="0 0 9 6"><path d="M1 5l3.500-3.500L8 5" stroke="#666" strokeWidth="1.500" fill="none" /></svg>
              </Collapse>
            </Group>
          </Ribbon>

          <DocArea>
            <Page>
              <ButtonRow>
                <SampleCol>
                  <SampleLabel>link</SampleLabel>
                  <SampleButton $mt={9}>Submit</SampleButton>
                </SampleCol>
                <SampleCol>
                  <SampleLabel $wavy>input:button</SampleLabel>
                  <SampleButton $mt={10}><Wavy>Submit</Wavy></SampleButton>
                </SampleCol>
              </ButtonRow>
              <Parallelogram>Jelly Star</Parallelogram>
            </Page>
          </DocArea>
        </WordWindow>
      </Stage>

      <MeetingBar>
        {bar.map((b) => (
          <React.Fragment key={b.label}>
            <BarItem $w={b.w} $ml={b.ml} $green={b.green}>
              <BarIcon $shift={b.shift}>{Icons[b.icon]}{b.count}</BarIcon>
              <BarLabel>{b.label}</BarLabel>
            </BarItem>
            {b.chev !== undefined && <BarChevron $ml={b.chev}><ChevronUp /></BarChevron>}
          </React.Fragment>
        ))}
        <LeaveButton>Leave</LeaveButton>
      </MeetingBar>

      <Taskbar>
        <Weather>
          <svg width="38" height="30" viewBox="0 0 38 30">
            <circle cx="26" cy="11" r="10" fill="#f2a02a" />
            <path d="M9 29a8 8 0 0 1-2-15 10 10 0 0 1 19-2 8 8 0 0 1 3 17z" fill="#c5dcf5" stroke="#8cb6e6" />
          </svg>
          <WeatherText>
            <span>31°C</span>
            <WeatherSub>Berawan</WeatherSub>
          </WeatherText>
        </Weather>
        <svg width="35" height="35" viewBox="0 0 35 35">
          <defs><linearGradient id="win" x1="0" y1="0" x2="1" y2="1"><stop offset="0" stopColor="#4cc2ff" /><stop offset="1" stopColor="#0078d4" /></linearGradient></defs>
          <path d="M2 0h14.500v16.500H0V2a2 2 0 0 1 2-2zM18.500 0H33a2 2 0 0 1 2 2v14.500H18.500zM0 18.500h16.500V35H2a2 2 0 0 1-2-2zM18.500 18.500H35V33a2 2 0 0 1-2 2H18.500z" fill="url(#win)" />
        </svg>
        <SearchPill>
          <svg width="22" height="22" viewBox="0 0 22 22" fill="none" stroke="#222" strokeWidth="2"><circle cx="9.500" cy="9.500" r="8" /><path d="M15.500 15.500L21 21" /></svg>
          Search
          <OwlSpot><Owl /></OwlSpot>
        </SearchPill>
        <TaskSlot $first>
          <svg width="36" height="34" viewBox="0 0 36 34">
            <rect x="0" y="10" width="27" height="24" rx="2" fill="#2a2a2a" />
            <rect x="9" y="0" width="27" height="24" rx="2" fill="#f4f4f4" />
            <rect x="9" y="10" width="18" height="14" fill="#b9b9b9" />
          </svg>
        </TaskSlot>
        <TaskSlot>
          <svg width="34" height="34" viewBox="0 0 34 34">
            <defs><linearGradient id="meet" x1="0" y1="0" x2="1" y2="1"><stop offset="0" stopColor="#8b62c6" /><stop offset="1" stopColor="#4f5bd5" /></linearGradient></defs>
            <path d="M17 0a17 17 0 1 1-8 32l-8 2 2-8A17 17 0 0 1 17 0z" fill="url(#meet)" />
            <rect x="8" y="11" width="13" height="12" rx="2" fill="#fff" /><path d="M22 16l5-4v10l-5-4z" fill="#fff" />
          </svg>
        </TaskSlot>
        <TaskSlot>
          <svg width="36" height="33" viewBox="0 0 36 33">
            <path d="M0 2a2 2 0 0 1 2-2h11l4 4h17v29H0z" fill="#d9a106" />
            <rect x="0" y="5" width="36" height="28" rx="1" fill="#ffd24d" />
            <path d="M6 33v-8a3 3 0 0 1 3-3h18a3 3 0 0 1 3 3v8z" fill="#0c7bd1" />
            <rect x="11" y="28" width="14" height="2" fill="#07487e" />
          </svg>
          <RunDot />
        </TaskSlot>
        <TaskSlot>
          <svg width="36" height="36" viewBox="0 0 36 36">
            <defs><linearGradient id="edge" x1="0" y1="1" x2="1" y2="0"><stop offset="0" stopColor="#0c59a4" /><stop offset=".5" stopColor="#1fa2d8" /><stop offset="1" stopColor="#5fe06a" /></linearGradient></defs>
            <circle cx="18" cy="18" r="18" fill="url(#edge)" />
            <path d="M32 28c-4 6-14 9-21 5-5-3-8-8-8-13 3 7 9 11 16 11 5 0 10-1 13-3z" fill="#0c59a4" />
            <path d="M34 21c-4-5-12-5-15-1-2 3 0 7 4 9-6 1-12-2-13-8-1-5 3-10 9-10 7 0 13 4 15 10z" fill="#1f8fd6" />
            <path d="M34 24c-6 3-13 3-16-1-1-4 2-7 6-6 4 0 6 2 10 7z" fill="#d9d9d9" />
          </svg>
          <RunDot />
        </TaskSlot>
        <TaskSlot>
          <svg width="36" height="28" viewBox="0 0 36 28">
            <rect width="36" height="28" rx="2" fill="#3a3a3a" />
            <rect width="36" height="5" fill="#8c8c8c" /><rect x="12" width="12" height="5" fill="#b0b0b0" />
            <path d="M5 11l7 5-7 5" stroke="#fff" strokeWidth="2.500" fill="none" /><rect x="16" y="20" width="12" height="3" fill="#fff" />
          </svg>
          <RunDot />
        </TaskSlot>
        <TaskSlot>
          <svg width="37" height="37" viewBox="0 0 37 37">
            <path d="M27 0l10 5v27l-10 5L12 22 5 28l-4-2V11l4-2 7 6z" fill="#0078d4" />
            <path d="M27 0l10 5v27l-10 5z" fill="#1fa8f1" />
            <path d="M27 11l-9 7.500 9 7.500z" fill="#d9d9d9" /><path d="M4 13l5 5.500-5 5z" fill="#d9d9d9" />
          </svg>
          <RunDot />
        </TaskSlot>
        <TaskSlot>
          <svg width="36" height="36" viewBox="0 0 36 36">
            <circle cx="18" cy="18" r="18" fill="#ea4335" />
            <path d="M18 18L2.400 9A18 18 0 0 0 18 36l9-18z" fill="#34a853" />
            <path d="M18 18h17.500A18 18 0 0 1 18 36l9-15z" fill="#fbbc05" />
            <circle cx="18" cy="18" r="8.500" fill="#4285f4" stroke="#fff" strokeWidth="2.500" />
          </svg>
          <RunDot />
        </TaskSlot>
        <TaskSlot>
          <svg width="36" height="36" viewBox="0 0 36 36">
            <rect width="36" height="36" rx="13" fill="#0b5cff" />
            <text x="18" y="21" fontSize="9" fontWeight="700" fill="#fff" textAnchor="middle" fontFamily="Open Sans">zoom</text>
          </svg>
          <RunDot />
        </TaskSlot>

        <TraySpot $ml={121} $w={20}><svg width="16" height="10" viewBox="0 0 16 10"><path d="M1 9l7-7 7 7" stroke="#222" strokeWidth="1.800" fill="none" /></svg></TraySpot>
        <TraySpot $ml={29} $w={20}><svg width="18" height="24" viewBox="0 0 18 24" fill="none" stroke="#0f55a6" strokeWidth="1.600"><rect x="5" y="1" width="8" height="14" rx="4" /><path d="M1 11c0 4 3 7 8 7s8-3 8-7M9 18v6" /></svg></TraySpot>
        <TraySpot $ml={25} $w={26}><svg width="24" height="18" viewBox="0 0 24 18" fill="none" stroke="#222" strokeWidth="1.500"><path d="M1 6c6-6 16-6 22 0M4.500 9.500c4-4 11-4 15 0M8 13c2-2 6-2 8 0" /><circle cx="12" cy="16" r="1.500" fill="#222" stroke="none" /></svg></TraySpot>
        <TraySpot $ml={10} $w={26}><svg width="24" height="18" viewBox="0 0 24 18" fill="none" stroke="#222" strokeWidth="1.300"><path d="M1 6h4l6-5v16l-6-5H1zM15 5.500l8 7M23 5.500l-8 7" /></svg></TraySpot>
        <TraySpot $ml={8} $w={30}><svg width="26" height="20" viewBox="0 0 26 20" fill="none" stroke="#222" strokeWidth="1.400"><rect x="2" y="5" width="20" height="13" rx="2" /><path d="M22 9h2a1 1 0 0 1 1 1v3a1 1 0 0 1-1 1h-2" /><path d="M4 16l3-10h6l-3 10z" fill="#222" /><path d="M6 0L4 5h3L6 9" /></svg></TraySpot>
        <Clock>17:05<br />26/01/2024</Clock>
        <TraySpot $ml={13} $w={20}><svg width="20" height="24" viewBox="0 0 20 24" fill="#0f4aa0"><path d="M10 0c4 0 7 3 7 8v6l3 4H0l3-4V8c0-5 3-8 7-8zM6 20h8a4 4 0 0 1-8 0z" /></svg></TraySpot>
      </Taskbar>
    </Screen>
  );
}
